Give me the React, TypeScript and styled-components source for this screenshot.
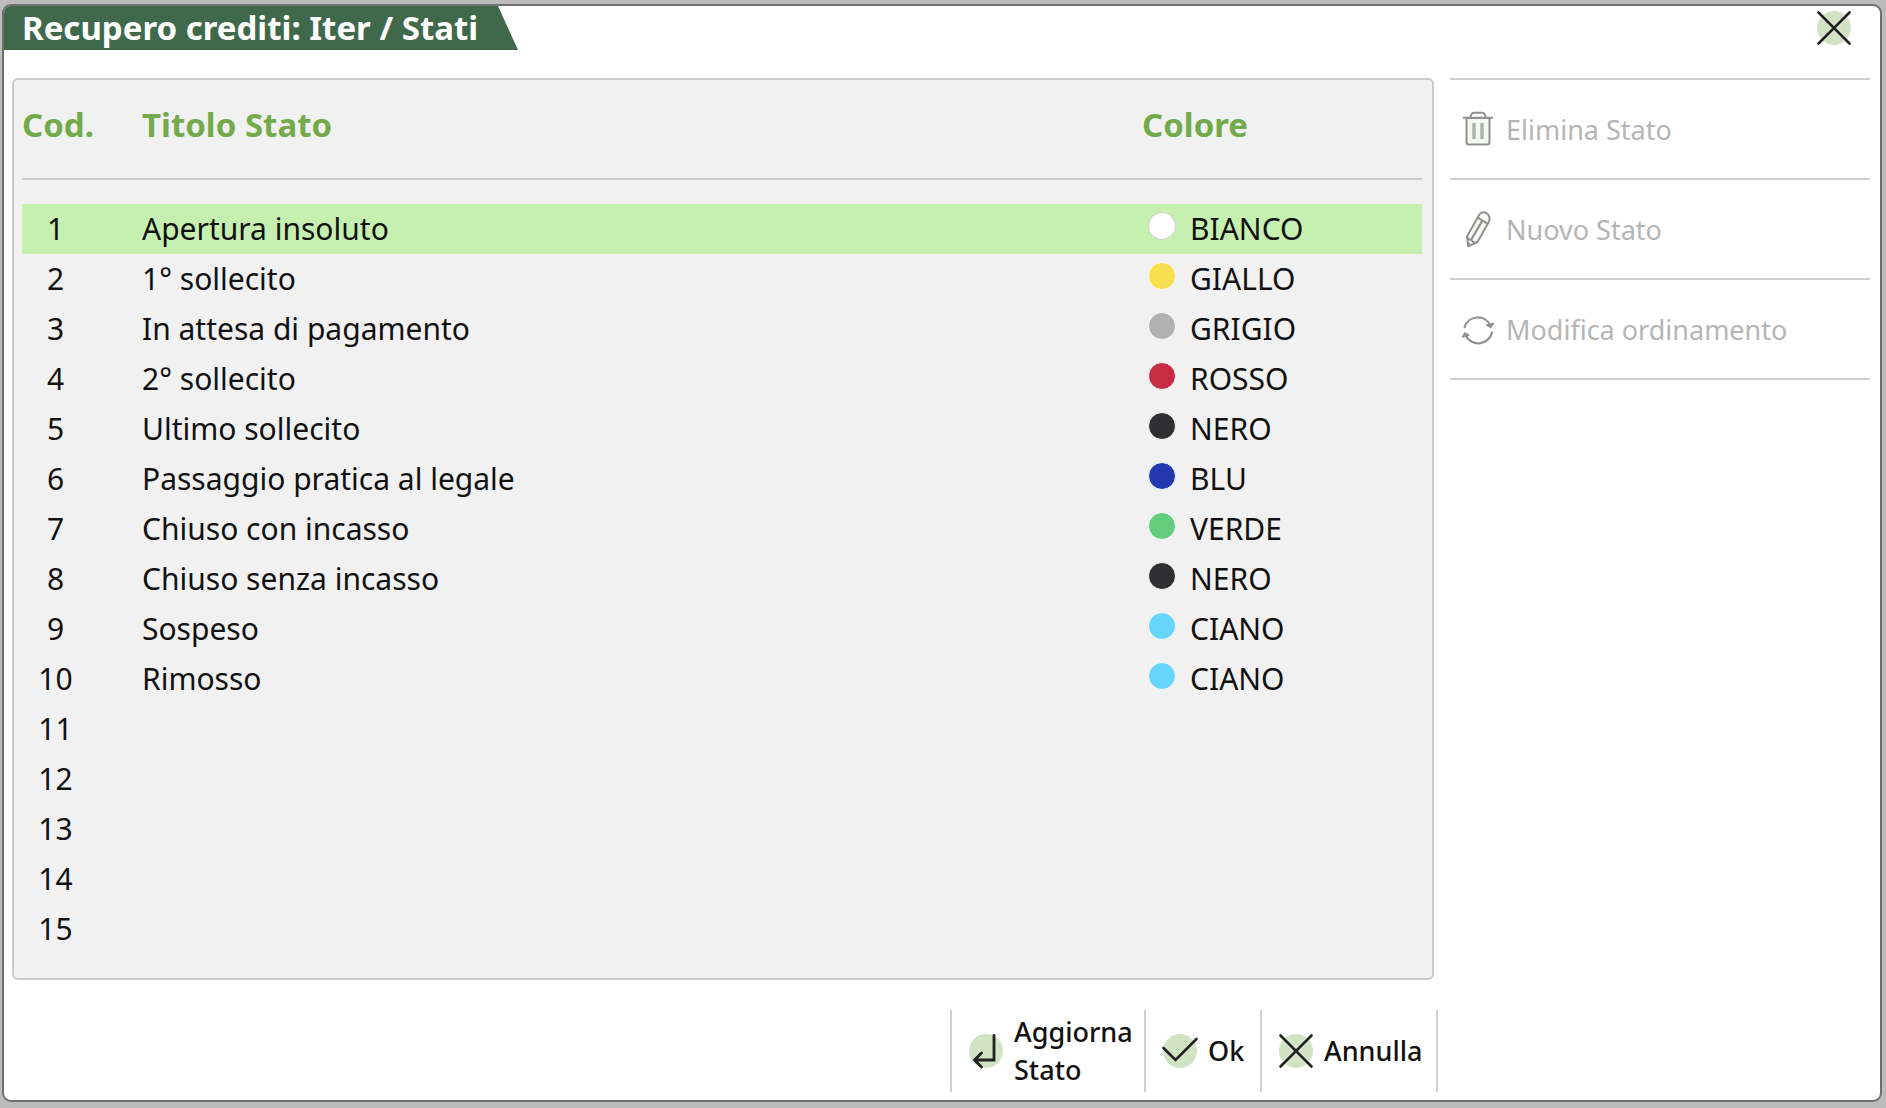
import React, { useState } from "react";
import styled, { createGlobalStyle } from "styled-components";

const GlobalStyle = createGlobalStyle`
  *, *::before, *::after { box-sizing: border-box; }
  body {
    margin: 0;
    background: #bcbcbc;
    font-family: "Noto Sans", "Open Sans", sans-serif;
    color: #111;
  }
  button { font-family: inherit; }
`;

const Page = styled.div`
  min-height: 100vh;
  padding: 4px 4px 6px 2px;
  display: flex;
`;

const Dialog = styled.main`
  flex: 1;
  min-width: 0;
  display: flex;
  flex-direction: column;
  background: #fff;
  border: 2px solid #6f6f6f;
  border-radius: 9px;
  overflow: hidden;
`;

const TitleBar = styled.header`
  display: flex;
  justify-content: space-between;
  align-items: flex-start;
`;

const Title = styled.h1`
  margin: 0;
  height: 44px;
  width: 514px;
  padding-left: 18px;
  background: #40694b;
  color: #fff;
  font-size: 33px;
  font-weight: 700;
  line-height: 44px;
  white-space: nowrap;
  clip-path: polygon(0 0, calc(100% - 20px) 0, 100% 100%, 0 100%);
`;

const CloseButton = styled.button`
  margin: 5px 29px 0 0;
  padding: 0;
  border: 0;
  background: none;
  line-height: 0;
  cursor: pointer;
`;

const Content = styled.div`
  display: flex;
  align-items: flex-start;
  gap: 16px;
  padding: 28px 10px 0 8px;
`;

const Panel = styled.section`
  flex: 1;
  min-width: 0;
  padding: 0 10px 24px 8px;
  background: #f1f1f1;
  border: 2px solid #cacaca;
  border-radius: 6px;
`;

const Table = styled.table`
  width: 100%;
  table-layout: fixed;
  border-collapse: separate;
  border-spacing: 0;

  tbody::before {
    content: "";
    display: block;
    height: 24px;
  }
`;

const HeadCell = styled.th<{ $width?: number }>`
  width: ${(p) => (p.$width ? `${p.$width}px` : "auto")};
  height: 100px;
  padding: 0 0 8px;
  border-bottom: 2px solid #cacaca;
  color: #72aa4c;
  font-size: 33px;
  font-weight: 700;
  line-height: 40px;
  text-align: left;
`;

const Row = styled.tr<{ $selected: boolean }>`
  background: ${(p) => (p.$selected ? "#c6f0b0" : "transparent")};
`;

const Cell = styled.td`
  height: 50px;
  padding: 0;
  font-size: 30px;
  line-height: 40px;
  white-space: nowrap;
`;

const CodeCell = styled(Cell)`
  padding-right: 53px;
  text-align: center;
`;

const ColorTag = styled.span`
  display: flex;
  align-items: center;
  gap: 14px;
  padding-left: 6px;
`;

const Dot = styled.span<{ $color: string }>`
  width: 28px;
  height: 28px;
  margin-bottom: 6px;
  border-radius: 50%;
  background: ${(p) => p.$color};
  border: 1px solid ${(p) => (p.$color === "#ffffff" ? "#cfcfcf" : "#f8f8f8")};
`;

const Sidebar = styled.nav`
  width: 420px;
  border-top: 2px solid #cfcfcf;
`;

const SideButton = styled.button`
  display: flex;
  align-items: center;
  gap: 10px;
  width: 100%;
  height: 100px;
  padding: 0 0 0 10px;
  border: 0;
  border-bottom: 2px solid #cfcfcf;
  background: none;
  color: #b5b5b5;
  font-size: 27px;
  text-align: left;
`;

const Footer = styled.footer`
  display: flex;
  justify-content: flex-end;
  padding: 30px 442px 8px 0;
`;

const FooterButton = styled.button<{ $width: number }>`
  display: flex;
  align-items: center;
  gap: 11px;
  width: ${(p) => p.$width}px;
  height: 82px;
  padding: 0 0 0 17px;
  border: 0;
  border-left: 2px solid #cfcfcf;
  background: none;
  color: #111;
  font-size: 27px;
  font-weight: 500;
  line-height: 38px;
  text-align: left;
  cursor: pointer;

  &:last-child {
    border-right: 2px solid #cfcfcf;
  }
`;

const Icon = styled.svg`
  flex: none;
  display: block;
  fill: none;
`;

const CrossIcon = () => (
  <Icon width="34" height="34" viewBox="0 0 34 34" aria-hidden="true">
    <circle cx="17" cy="17" r="17" fill="#d0e4c4" />
    <path d="M1.5 1.5 32.5 32.5M32.5 1.5 1.5 32.5" stroke="#fff" strokeWidth="5" opacity=".35" />
    <path d="M1.5 1.5 32.5 32.5M32.5 1.5 1.5 32.5" stroke="#222" strokeWidth="2.6" strokeLinecap="round" />
  </Icon>
);

const CheckIcon = () => (
  <Icon width="34" height="34" viewBox="0 0 34 34" overflow="visible" aria-hidden="true">
    <circle cx="17" cy="17" r="17" fill="#d0e4c4" />
    <path d="M.5 14 12.5 26 33.5 5" stroke="#222" strokeWidth="2.6" strokeLinecap="round" />
  </Icon>
);

const ReturnIcon = () => (
  <Icon width="34" height="34" viewBox="0 0 34 34" overflow="visible" aria-hidden="true">
    <circle cx="17" cy="17" r="17" fill="#d0e4c4" />
    <path d="M25 1.5V26H6M12.5 19 5.5 26 12.5 33" stroke="#222" strokeWidth="2.8" strokeLinecap="round" />
  </Icon>
);

const TrashIcon = () => (
  <Icon width="36" height="40" viewBox="0 -2 36 40" stroke="#919191" strokeWidth="2" aria-hidden="true">
    <path d="M6.5 7V31Q6.5 33.5 9 33.5H27Q29.5 33.5 29.5 31V7Z" fill="#f3f9ef" />
    <path d="M3 6.7H33M10.5 6C11 3 12 1.8 14 1.8H22C24 1.8 25 3 25.5 6" />
    <path d="M14 12V28M22 12V28" stroke="#b0b0b0" strokeWidth="3.4" />
  </Icon>
);

const PencilIcon = () => (
  <Icon width="36" height="40" viewBox="0 -1 36 40" stroke="#919191" strokeWidth="2" strokeLinejoin="round" aria-hidden="true">
    <path d="M7 26.5 18.5 6Q21.5 .5 26.5 3.2 31.5 6.5 28.5 12.5L17.5 32 8.3 36.3Z" fill="#f8faf6" />
    <path d="M17.7 7.7 27.8 13.8M7 26.5Q8 30.5 11.5 29.5 12.5 33.5 17.5 32" />
    <path d="M11.5 29 22.5 10.5" strokeWidth="2.4" />
    <path d="M8 36V32.5L11 34.8Z" fill="#919191" strokeWidth="1" />
  </Icon>
);

const RefreshIcon = () => (
  <Icon width="36" height="40" viewBox="0 -1 36 40" stroke="#919191" strokeWidth="2.2" strokeLinecap="round" strokeLinejoin="round" aria-hidden="true">
    <path d="M4.5 17.2A14 14 0 0 1 30.5 15.5M32 22.5A14 14 0 0 1 5.5 25" />
    <path d="M26.5 15 30.7 17.5 33.5 13.5ZM2.5 27 4.8 22.8 9 25.2Z" fill="#919191" strokeWidth="1.4" />
  </Icon>
);

const COLORS: Record<string, string> = {
  BIANCO: "#ffffff",
  GIALLO: "#f8df4f",
  GRIGIO: "#b1b1b1",
  ROSSO: "#c62c43",
  NERO: "#2f2f31",
  BLU: "#2439ad",
  VERDE: "#64ce7e",
  CIANO: "#65d5fb",
};

const STATES: [string, string][] = [
  ["Apertura insoluto", "BIANCO"],
  ["1° sollecito", "GIALLO"],
  ["In attesa di pagamento", "GRIGIO"],
  ["2° sollecito", "ROSSO"],
  ["Ultimo sollecito", "NERO"],
  ["Passaggio pratica al legale", "BLU"],
  ["Chiuso con incasso", "VERDE"],
  ["Chiuso senza incasso", "NERO"],
  ["Sospeso", "CIANO"],
  ["Rimosso", "CIANO"],
];

const ROW_COUNT = 15;

export default function App() {
  const [selected, setSelected] = useState(0);

  return (
    <Page>
      <GlobalStyle />
      <Dialog>
        <TitleBar>
          <Title>Recupero crediti: Iter / Stati</Title>
          <CloseButton type="button" aria-label="Chiudi">
            <CrossIcon />
          </CloseButton>
        </TitleBar>
        <Content>
          <Panel>
            <Table>
              <thead>
                <tr>
                  <HeadCell $width={120}>Cod.</HeadCell>
                  <HeadCell>Titolo Stato</HeadCell>
                  <HeadCell $width={280}>Colore</HeadCell>
                </tr>
              </thead>
              <tbody>
                {Array.from({ length: ROW_COUNT }, (_, i) => {
                  const state = STATES[i];
                  return (
                    <Row key={i} $selected={i === selected} onClick={() => setSelected(i)}>
                      <CodeCell>{i + 1}</CodeCell>
                      <Cell>{state?.[0]}</Cell>
                      <Cell>
                        {state && (
                          <ColorTag>
                            <Dot $color={COLORS[state[1]]} />
                            {state[1]}
                          </ColorTag>
                        )}
                      </Cell>
                    </Row>
                  );
                })}
              </tbody>
            </Table>
          </Panel>
          <Sidebar>
            <SideButton type="button" disabled>
              <TrashIcon />
              Elimina Stato
            </SideButton>
            <SideButton type="button" disabled>
              <PencilIcon />
              Nuovo Stato
            </SideButton>
            <SideButton type="button" disabled>
              <RefreshIcon />
              Modifica ordinamento
            </SideButton>
          </Sidebar>
        </Content>
        <Footer>
          <FooterButton type="button" $width={194}>
            <ReturnIcon />
            Aggiorna Stato
          </FooterButton>
          <FooterButton type="button" $width={116}>
            <CheckIcon />
            Ok
          </FooterButton>
          <FooterButton type="button" $width={178}>
            <CrossIcon />
            Annulla
          </FooterButton>
        </Footer>
      </Dialog>
    </Page>
  );
}
